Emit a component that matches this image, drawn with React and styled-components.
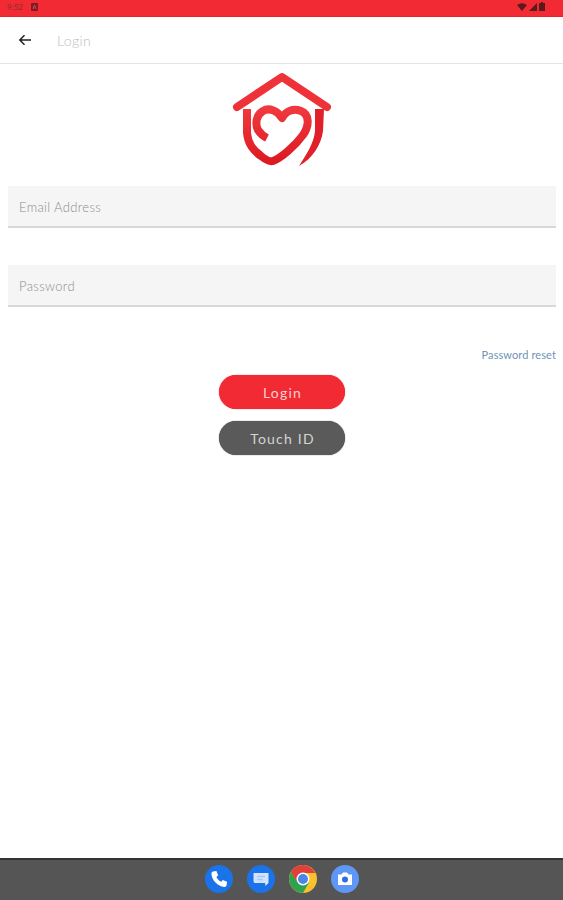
import React from 'react';
import styled, { createGlobalStyle } from 'styled-components';

const GlobalStyle = createGlobalStyle`
  html, body {
    margin: 0;
    padding: 0;
    background: #fff;
    font-family: 'Lato', 'Open Sans', sans-serif;
  }
  * {
    box-sizing: border-box;
  }
`;

const Page = styled.div`
  width: 563px;
  height: 900px;
  display: flex;
  flex-direction: column;
  overflow: hidden;
`;

const StatusBar = styled.div`
  height: 17px;
  flex: none;
  background: #f12a33;
  border-bottom: 1px solid #e9222c;
  display: flex;
  align-items: center;
  justify-content: space-between;
  padding: 0 18px 3px 7px;
`;

const StatusGroup = styled.div`
  display: flex;
  align-items: center;
  gap: ${p => p.$gap}px;
`;

const Clock = styled.span`
  font-size: 8px;
  color: #8f2a30;
`;

const Header = styled.div`
  height: 47px;
  flex: none;
  display: flex;
  align-items: center;
  padding: 0 18px;
  border-bottom: 1px solid #e4e4e4;
`;

const BackButton = styled.div`
  width: 39px;
  height: 14px;
  display: flex;
  align-items: center;
`;

const Title = styled.span`
  font-size: 14px;
  font-weight: 300;
  color: #bdbdbd;
  letter-spacing: 0.4px;
`;

const Content = styled.div`
  flex: 1;
  display: flex;
  flex-direction: column;
  padding: 8px 7px 0 8px;
`;

const LogoRow = styled.div`
  display: flex;
  justify-content: center;
  height: 97px;
  padding-left: 1px;
`;

const LogoMark = styled.svg`
  width: 125px;
  height: 110px;
  margin-top: -7px;
`;

const Field = styled.div`
  height: 42px;
  margin-top: ${p => p.$top}px;
  background: #f5f5f5;
  border-bottom: 2px solid #d8d8d8;
  display: flex;
  align-items: center;
  padding: 2px 0 0 11px;
  font-size: 13px;
  font-weight: 300;
  color: #8c8c8c;
  letter-spacing: 0.35px;
`;

const ResetLink = styled.div`
  margin-top: 41px;
  text-align: right;
  font-size: 11px;
  color: #6f93b6;
  line-height: 14px;
  letter-spacing: 0.1px;
`;

const Actions = styled.div`
  display: flex;
  flex-direction: column;
  align-items: center;
  gap: 12px;
  margin-top: 13px;
  padding-right: 1px;
`;

const PillButton = styled.div`
  width: 126px;
  height: 34px;
  border-radius: 17px;
  background: ${p => p.$bg};
  color: ${p => p.$color};
  box-shadow: 0 0 1px ${p => p.$edge};
  display: flex;
  align-items: center;
  justify-content: center;
  padding-left: 2px;
  font-size: 14px;
  letter-spacing: 1.2px;
`;

const NavBar = styled.div`
  height: 42px;
  flex: none;
  background: #555555;
  border-top: 2px solid #333;
  display: flex;
  align-items: center;
  justify-content: center;
  gap: 14px;
  padding-bottom: 2px;
`;

const AppIcon = styled.svg`
  width: 28px;
  height: 28px;
  display: block;
`;

const Logo = () => (
  <LogoMark viewBox="0 0 125 110">
    <defs>
      <linearGradient id="logoRed" x1="0" y1="0" x2="0" y2="1">
        <stop offset="0" stopColor="#f0383e" />
        <stop offset="1" stopColor="#dd1a22" />
      </linearGradient>
    </defs>
    <g fill="none" stroke="#ee3238" strokeWidth="8" strokeLinecap="round" strokeLinejoin="round">
      <path d="M17 42 L62 12 L107 42" />
      <path
        stroke="url(#logoRed)"
        strokeLinecap="butt"
        d="M27 44 L27 68 C28 79 33 85 41 91 C46 95 50 97 53 96 C61 93 75 81 83 70 C90 60 89 49 81 46 C73 43 66 46 62 53 C58 46 49 42 43 46 C36 50 35 59 38 65 C40 68 43 71 47 73"
      />
    </g>
    <path d="M95 44 L104 44 L103 66 C101 80 93 93 79 101 C86 90 94 78 95 66 Z" fill="#e0202a" />
  </LogoMark>
);

const App = () => (
  <Page>
    <GlobalStyle />
    <StatusBar>
      <StatusGroup $gap={8}>
        <Clock>9:52</Clock>
        <svg width="7" height="8" viewBox="0 0 7 8">
          <rect width="7" height="8" rx="1" fill="#7c1d22" />
          <path d="M2 6 L3.5 2 L5 6" stroke="#e7444c" strokeWidth="1" fill="none" />
        </svg>
      </StatusGroup>
      <StatusGroup $gap={2}>
        <svg width="10" height="8" viewBox="0 0 10 8">
          <path d="M0 2 Q5 -1.5 10 2 L5 8 Z" fill="#5b1a1e" />
        </svg>
        <svg width="8" height="8" viewBox="0 0 8 8">
          <path d="M0 8 L8 0 L8 8 Z" fill="#5b1a1e" />
        </svg>
        <svg width="6" height="9" viewBox="0 0 6 9">
          <path d="M2 0 H4 V1 H6 V9 H0 V1 H2 Z" fill="#5b1a1e" />
        </svg>
      </StatusGroup>
    </StatusBar>
    <Header>
      <BackButton>
        <svg width="14" height="14" viewBox="0 0 14 14">
          <path d="M13 7 H2 M6.5 2.2 L1.8 7 L6.5 11.8" fill="none" stroke="#222" strokeWidth="1.5" />
        </svg>
      </BackButton>
      <Title>Login</Title>
    </Header>
    <Content>
      <LogoRow>
        <Logo />
      </LogoRow>
      <Field $top={17}>Email Address</Field>
      <Field $top={37}>Password</Field>
      <ResetLink>Password reset</ResetLink>
      <Actions>
        <PillButton $bg="#f12a33" $color="#f9d0d2" $edge="#d81f28">Login</PillButton>
        <PillButton $bg="#5a5a5a" $color="#d4d4d4" $edge="#333">Touch ID</PillButton>
      </Actions>
    </Content>
    <NavBar>
      <AppIcon viewBox="0 0 28 28">
        <circle cx="14" cy="14" r="14" fill="#1a73e8" />
        <path
          d="M8 6.4 L11.4 6 L13.2 10.4 L11.4 12 C12.4 14.2 14 15.8 16.2 16.8 L17.8 15 L22 16.8 L21.6 20.2 C21.4 21.4 20.4 22 19.2 21.9 C12.8 21.4 6.8 15.4 6.4 8.8 C6.4 7.6 7 6.6 8 6.4 Z"
          fill="#fff"
        />
      </AppIcon>
      <AppIcon viewBox="0 0 28 28">
        <circle cx="14" cy="14" r="14" fill="#1a73e8" />
        <path d="M6.5 8 H21.5 V18 L18.5 21 L18 18 H8 C7 18 6.5 17 6.5 16 Z" fill="#d2e3fc" />
        <path d="M10 11.5 H18 M10 14.5 H16" stroke="#a9c8fa" strokeWidth="1.4" />
      </AppIcon>
      <AppIcon viewBox="0 0 28 28">
        <circle cx="14" cy="14" r="14" fill="#fbc02d" />
        <path d="M14 0 A14 14 0 0 0 1.9 7 L8 17.5 L14 8 H26.1 A14 14 0 0 0 14 0 Z" fill="#e0403a" />
        <path d="M1.9 7 A14 14 0 0 0 14 28 L20 17.5 L8 17 Z" fill="#2fa24f" />
        <circle cx="14" cy="14" r="6.5" fill="#fff" />
        <circle cx="14" cy="14" r="5" fill="#4a86e8" />
      </AppIcon>
      <AppIcon viewBox="0 0 28 28">
        <circle cx="14" cy="14" r="14" fill="#5e97f6" />
        <path d="M7 9.5 H10.5 L12 7.5 H16 L17.5 9.5 H21 V20 H7 Z" fill="#fff" />
        <circle cx="14" cy="14.5" r="3" fill="#2f6fdb" />
      </AppIcon>
    </NavBar>
  </Page>
);

export default App;
